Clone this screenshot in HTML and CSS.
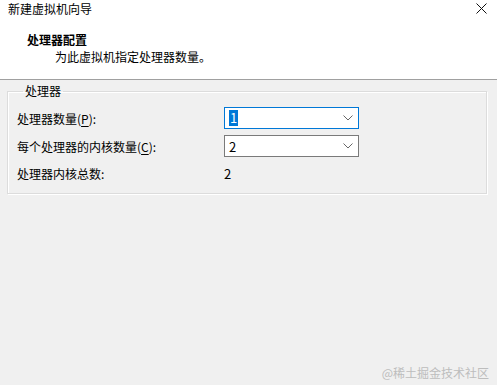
FILE: index.html
```html
<!DOCTYPE html>
<html lang="zh-CN">
<head>
    <meta charset="UTF-8">
    <title>新建虚拟机向导</title>
    <link rel="stylesheet" href="styles.css">
</head>
<body>
    <!-- Header -->
    <div class="header">
        <div class="titlebar">
            <span class="window-title">新建虚拟机向导</span>
            <svg class="close" width="11" height="11" viewBox="0 0 11 11">
                <path d="M0.5 0.5 L10.5 10.5 M10.5 0.5 L0.5 10.5" stroke="#111" stroke-width="1" fill="none"/>
            </svg>
        </div>
        <div class="heading">处理器配置</div>
        <div class="subheading">为此虚拟机指定处理器数量。</div>
    </div>

    <!-- Processor group -->
    <fieldset class="group">
        <legend>处理器</legend>
        <div class="row">
            <span class="label">处理器数量(<u>P</u>):</span>
            <div class="combo focused">
                <span class="value selected">1</span>
                <svg class="arrow" width="10" height="6" viewBox="0 0 10 6"><path d="M0.5 0.5 L5 5 L9.5 0.5" stroke="#666" fill="none"/></svg>
            </div>
        </div>
        <div class="row">
            <span class="label">每个处理器的内核数量(<u>C</u>):</span>
            <div class="combo">
                <span class="value">2</span>
                <svg class="arrow" width="10" height="6" viewBox="0 0 10 6"><path d="M0.5 0.5 L5 5 L9.5 0.5" stroke="#666" fill="none"/></svg>
            </div>
        </div>
        <div class="row">
            <span class="label">处理器内核总数:</span>
            <span class="total">2</span>
        </div>
    </fieldset>

    <div class="watermark">@稀土掘金技术社区</div>
</body>
</html>
```

FILE: styles.css
```css
body {
    margin: 0;
    height: 385px;
    background: #f0f0f0;
    font-family: "Noto Sans CJK SC", sans-serif;
    font-size: 12px;
    color: #000;
    position: relative;
    overflow: hidden;
}

.header {
    background: #fff;
    height: 80px;
    border-bottom: 1px solid #a0a0a0;
    box-sizing: border-box;
}

.titlebar {
    display: flex;
    justify-content: space-between;
    align-items: center;
    height: 17px;
    padding: 0 10px 0 8px;
}

.window-title {
    line-height: 17px;
}

.heading {
    font-weight: bold;
    margin: 14px 0 0 27px;
    line-height: 17px;
}

.subheading {
    margin: 0 0 0 55px;
    line-height: 17px;
}

.group {
    margin: 4px 10px 0 7px;
    padding: 6px 0 0 9px;
    border: 1px solid #dcdcdc;
    box-shadow: inset 1px 1px 0 #fff, 1px 1px 0 #fff;
    height: 110px;
    box-sizing: border-box;
}

.group legend {
    padding: 0 2px;
    margin-left: 6px;
    line-height: 14px;
}

.row {
    display: flex;
    align-items: center;
    height: 28px;
}

.row:last-child {
    height: 27px;
}

.label {
    width: 207px;
}

.label u {
    text-decoration: underline;
    text-underline-offset: 2px;
}

.combo {
    width: 135px;
    height: 22px;
    box-sizing: border-box;
    border: 1px solid #7a7a7a;
    background: #fff;
    display: flex;
    align-items: center;
    justify-content: space-between;
    padding: 0 5px 0 4px;
    font-size: 13px;
}

.combo.focused {
    border-color: #0078d7;
}

.value.selected {
    background: #0078d7;
    color: #fff;
    padding: 0 1px;
    line-height: 16px;
}

.total {
    font-size: 13px;
}

.watermark {
    position: absolute;
    right: 8px;
    bottom: 4px;
    color: #bdbdbd;
    font-size: 12px;
}
```
